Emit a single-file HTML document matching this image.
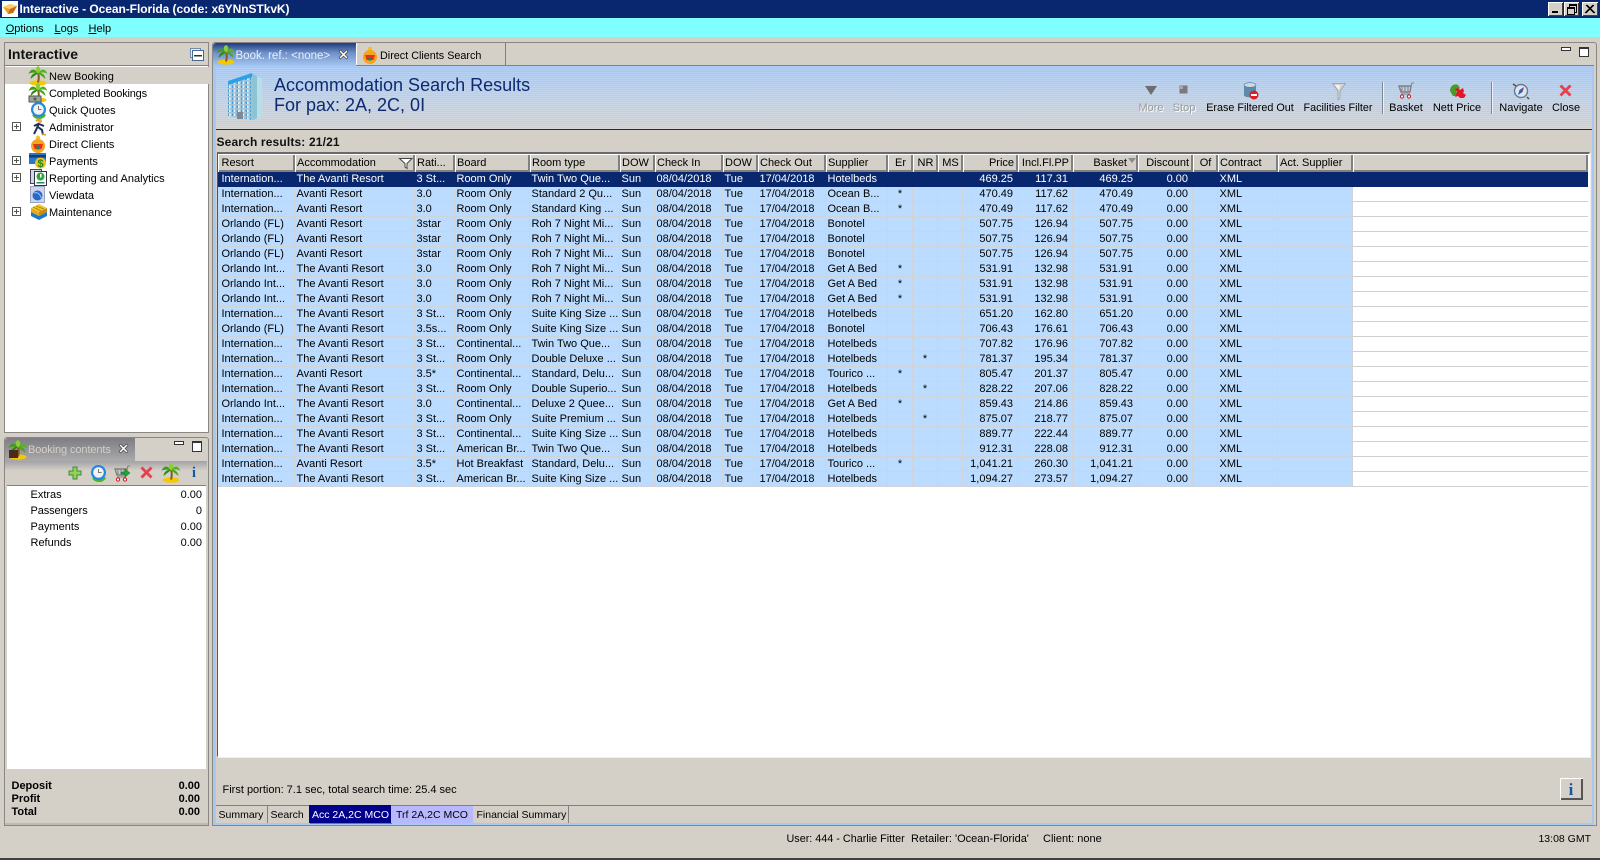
<!DOCTYPE html>
<html><head><meta charset="utf-8"><title>Interactive</title>
<style>
html,body{margin:0;padding:0;width:1600px;height:860px;overflow:hidden;background:#d4d0c8}
body{position:relative;font:11px/14px "Liberation Sans",Arial,sans-serif;color:#000}
.a{position:absolute;white-space:nowrap}
.t{position:absolute;white-space:nowrap;height:14px;line-height:14px}
.c{transform:translateX(-50%)}
.r{text-align:right}
svg{position:absolute;overflow:visible}
table{position:absolute;left:218px;top:154px;width:1370px;border-collapse:separate;border-spacing:0;table-layout:fixed}
th{height:18px;padding:0 0 0 2px;font-weight:normal;text-align:left;background:#d4d0c8;box-shadow:inset 1px 1px #fff,inset -2px -2px #808080;box-sizing:border-box;white-space:nowrap;overflow:hidden}
td{height:15px;padding:0 0 0 1.5px;box-sizing:border-box;background:#bbdcff;border-right:1px solid #d0d4d8;border-bottom:1px solid #d0d4d8;white-space:nowrap;overflow:hidden;line-height:14px}
td:first-child,th:first-child{padding-left:3.500px}
td.n,th.n{text-align:right;padding-right:4px;padding-left:0}
td.m,th.m{text-align:center;padding-left:0}
td:last-child{background:#fff;border-right:0;border-bottom:1px solid #d0d0d0}
tr.s td{background:#08276e;color:#fff;border-color:#08276e}
.b{position:absolute;background:#d4d0c8;box-shadow:inset 1px 1px #fff,inset -1px -1px #404040;width:16px;height:14px;top:2px}
.f{font-size:10.500px}
</style></head><body>
<svg width="0" height="0" style="position:absolute"><defs>
<g id="palm"><ellipse cx="10" cy="17" rx="8.500" ry="2.600" fill="#f6c800"/><path d="M10 16.500Q11.500 11 10 7" stroke="#8a5a1e" stroke-width="2" fill="none"/><path d="M10 8C7 2 3 2 .5 8C3 6.500 7 6 10 8Z" fill="#3f9d1a"/><path d="M10 8C13 2 17 2 19.500 8C17 6 13 6 10 8Z" fill="#55b322"/><path d="M10 8C7 4 7 1.500 10 0C13 1.500 13 4 10 8Z" fill="#8ad032"/><path d="M10 7C5.500 6.500 3 9 2.500 13C6 10 8 9 10 7Z" fill="#2f8a14"/><path d="M10 7C14.500 6.500 17 9 17.500 13C14 10 12 9 10 7Z" fill="#4aa61e"/></g>
<g id="clock"><path d="M3 14A8 8 0 0 0 17 14L14 12A5 5 0 0 1 6 13Z" fill="#4ab52a"/><circle cx="9.500" cy="8.500" r="7.500" fill="#2488de"/><circle cx="9.500" cy="8.500" r="5.300" fill="#f2f2f2"/><path d="M9.500 5V8.500H12.500" stroke="#777" stroke-width="1" fill="none"/></g>
<g id="cart"><path d="M1 3H13L12 9H3Z" fill="none" stroke="#808080" stroke-width="1.400"/><path d="M4 3V9M7 3V9M10 3V9M13 3L14 0H16M3 11H12" stroke="#808080" fill="none"/><circle cx="4" cy="13.500" r="1.600" fill="#fff" stroke="#d01818"/><circle cx="11" cy="13.500" r="1.600" fill="#fff" stroke="#d01818"/></g>
<g id="x"><path d="M1.500 3.500L3.500 1.500L7.500 5.500L11.500 1.500L13.500 3.500L9.500 7.500L13.500 11.500L11.500 13.500L7.500 9.500L3.500 13.500L1.500 11.500L5.500 7.500Z" fill="#e4404e"/></g>
<g id="wx"><path d="M1 2.500L2.500 1L5.500 4L8.500 1L10 2.500L7 5.500L10 8.500L8.500 10L5.500 7L2.500 10L1 8.500L4 5.500Z" fill="#fff" stroke="#333" stroke-width=".6"/></g>
<g id="person"><circle cx="9" cy="3" r="2.200" fill="#f2c21a"/><circle cx="9" cy="11" r="7" fill="#f4a41e"/><path d="M4 9H14L12.500 14H5.500Z" fill="#e8301a"/><rect x="7.500" y="11" width="3" height="3.500" fill="#128a64"/></g>
<pattern id="win" width="4.500" height="4" patternUnits="userSpaceOnUse"><rect width="4.500" height="4" fill="#a9c3d4"/><rect x=".5" y=".5" width="3" height="2.500" fill="#e4f2fa"/><rect x=".5" y=".5" width="1.500" height="2.500" fill="#3aa0e0"/></pattern>
</defs></svg>

<!-- title bar -->
<div class="a" style="left:0;top:0;width:1600px;height:18px;background:#08276e"></div>
<svg style="left:2px;top:1px" width="16" height="16"><rect width="16" height="16" fill="#fff"/><path d="M1 6L8 3L15 5L11 12L6 13Z" fill="#f0a020"/><path d="M1 6L8 8L15 5L8 3Z" fill="#f7d070"/><path d="M8 8L6 13L11 12L15 5Z" fill="#c86a10"/></svg>
<div class="t" style="left:19.500px;top:2px;color:#fff;font-weight:bold;font-size:12px;letter-spacing:-.06px">Interactive - Ocean-Florida (code: x6YNnSTkvK)</div>
<div class="b" style="left:1548px;width:15px"><div class="a" style="left:4px;top:9px;width:6px;height:2px;background:#000"></div></div>
<div class="b" style="left:1564px;width:15px"><div class="a" style="left:5px;top:2px;width:6px;height:6px;border:1px solid #000;border-top-width:2px"></div><div class="a" style="left:3px;top:5px;width:6px;height:5px;border:1px solid #000;border-top-width:2px;background:#d4d0c8"></div></div>
<div class="b" style="left:1582px"><svg style="left:4px;top:3px" width="9" height="8"><path d="M0 0L8 8M8 0L0 8M1 0L9 8M7 0L-1 8" stroke="#000" stroke-width=".9"/></svg></div>

<!-- menu -->
<div class="a" style="left:0;top:18px;width:1600px;height:19px;background:#80ffff"></div>
<div class="t" style="left:5.700px;top:22px"><u>O</u>ptions</div>
<div class="t" style="left:54.500px;top:22px"><u>L</u>ogs</div>
<div class="t" style="left:88.500px;top:22px"><u>H</u>elp</div>

<!-- left panel -->
<div class="a" style="left:4px;top:42px;width:203px;height:389px;border:1px solid #8a8782;background:#fff"></div>
<div class="a" style="left:5px;top:43px;width:203px;height:22px;background:#d4d0c8;border-bottom:1px solid #808080"></div>
<div class="t" style="left:8px;top:47px;font-weight:bold;font-size:14px;color:#111">Interactive</div>
<svg style="left:190px;top:48px" width="14" height="13"><rect x=".5" y=".5" width="10" height="9" fill="#e8eef6" stroke="#6f8cb0"/><rect x="2.500" y="2.500" width="11" height="10" fill="#fff" stroke="#48688e"/><rect x="4" y="7" width="8" height="1.500" fill="#333"/></svg>
<div class="a" style="left:5px;top:67px;width:204px;height:17px;background:#d4d0c8"></div>

<svg style="left:28px;top:66px" width="20" height="20"><use href="#palm"/></svg>
<svg style="left:28px;top:83px" width="20" height="20"><use href="#palm"/><rect x="1" y="13" width="12" height="6" fill="#9aa888" stroke="#556"/><circle cx="7" cy="16" r="1.500" fill="#556"/></svg>
<svg style="left:29px;top:101px" width="20" height="20"><use href="#clock"/></svg>
<svg style="left:31px;top:118px" width="18" height="18"><circle cx="9" cy="3" r="2" fill="#e8a868"/><path d="M8 5L6 10L3 16M7 9L11 12L12 17M7 6L3 8M8 6L13 8" stroke="#203060" stroke-width="2" fill="none"/><path d="M5 3L8 1" stroke="#e8a020" stroke-width="2"/><path d="M11 16L15 17" stroke="#d0a020" stroke-width="1.500"/></svg>
<svg style="left:29px;top:135px" width="18" height="18"><use href="#person"/></svg>
<svg style="left:29px;top:152px" width="18" height="18"><rect y="1" width="17" height="11" fill="#2a78c8"/><rect y="3" width="17" height="2.500" fill="#163a78"/><circle cx="11.500" cy="11" r="5.500" fill="#f2c21a"/><text x="11.500" y="15" text-anchor="middle" font-size="11" font-weight="bold" fill="#1a8a28" font-family="Liberation Sans">$</text></svg>
<svg style="left:30px;top:169px" width="18" height="18"><rect x=".5" y=".5" width="11" height="14" fill="#cfd8e4" stroke="#445"/><rect x="4.500" y="2.500" width="12" height="14" fill="#fff" stroke="#334"/><circle cx="10.500" cy="7.500" r="4" fill="#2aa838"/><rect x="10" y="5" width="1.500" height="3.500" fill="#fff"/><rect x="6.500" y="13" width="8" height="1.500" fill="#286"/></svg>
<svg style="left:30px;top:186px" width="16" height="18"><rect x=".5" y=".5" width="14" height="16" fill="#cdd6ec" stroke="#9aa4c0"/><circle cx="7.500" cy="9.500" r="5" fill="#2a68c8"/><path d="M4 7Q7 6 9 8T11 12" stroke="#9cc8f0" fill="none"/></svg>
<svg style="left:30px;top:203px" width="18" height="18"><path d="M1 5L9 1L17 5L9 9Z" fill="#f0c828"/><path d="M1 5V9L9 13V9Z" fill="#e8a818"/><path d="M17 5V9L9 13V9Z" fill="#c88818"/><path d="M1 9V13L9 17V13ZM17 9V13L9 17V13Z" fill="#1a78c8"/><path d="M3 4L11 8M6 3L14 6" stroke="#a87810" stroke-width=".7"/></svg>
<div class="t" style="left:49px;top:70px">New Booking</div>
<div class="t" style="left:49px;top:87px;letter-spacing:-.2px">Completed Bookings</div>
<div class="t" style="left:49px;top:104px">Quick Quotes</div>
<div class="t" style="left:49px;top:121px">Administrator</div>
<div class="t" style="left:49px;top:138px">Direct Clients</div>
<div class="t" style="left:49px;top:155px">Payments</div>
<div class="t" style="left:49px;top:172px">Reporting and Analytics</div>
<div class="t" style="left:49px;top:189px">Viewdata</div>
<div class="t" style="left:49px;top:206px">Maintenance</div>
<svg style="left:12px;top:122px" width="9" height="9"><path d="M.5 .5H8.500V8.500H.5ZM2 4.500H7M4.500 2V7" fill="#fff" stroke="#555"/></svg>
<svg style="left:12px;top:156px" width="9" height="9"><path d="M.5 .5H8.500V8.500H.5ZM2 4.500H7M4.500 2V7" fill="#fff" stroke="#555"/></svg>
<svg style="left:12px;top:173px" width="9" height="9"><path d="M.5 .5H8.500V8.500H.5ZM2 4.500H7M4.500 2V7" fill="#fff" stroke="#555"/></svg>
<svg style="left:12px;top:207px" width="9" height="9"><path d="M.5 .5H8.500V8.500H.5ZM2 4.500H7M4.500 2V7" fill="#fff" stroke="#555"/></svg>

<!-- booking contents panel -->
<div class="a" style="left:4px;top:437px;width:203px;height:387px;border:1px solid #8a8782;border-radius:3px 3px 0 0;background:#d4d0c8"></div>
<div class="a" style="left:5px;top:438px;width:130px;height:23px;background:linear-gradient(#7d7d83,#aaa9ab);border-radius:3px 0 0 0"></div>
<div class="a" style="left:5px;top:461px;width:202px;height:24px;background:linear-gradient(#a2a2a6,#d4d0c8 40%);"></div>
<div class="a" style="left:7px;top:485px;width:199px;height:1px;background:#808080"></div>
<div class="a" style="left:7px;top:486px;width:199px;height:283px;background:#fff"></div>
<svg style="left:8px;top:440px" width="20" height="20"><use href="#palm"/><rect x="1" y="10" width="9" height="8" fill="#4a2a18"/></svg>
<div class="t" style="left:28px;top:443px;color:#d4d0c8;letter-spacing:-.1px">Booking contents</div>
<svg style="left:118px;top:443px" width="11" height="11"><use href="#wx"/></svg>
<div class="a" style="left:174px;top:441px;width:8px;height:2px;border:1px solid #333;background:#fff"></div>
<div class="a" style="left:192px;top:441px;width:8px;height:8px;border:1px solid #333;border-top-width:2px;background:#fff"></div>
<svg style="left:68px;top:466px" width="14" height="14"><path d="M5 1H9V5H13V9H9V13H5V9H1V5H5Z" fill="#98d050" stroke="#3a8a48"/></svg>
<svg style="left:89px;top:464px" width="20" height="20"><use href="#clock"/></svg>
<svg style="left:114px;top:466px" width="18" height="16"><use href="#cart"/><path d="M7 6H11V3L16 7L11 11V8H7Z" fill="#12b030" stroke="#086a18" stroke-width=".5"/></svg>
<svg style="left:139px;top:465px" width="15" height="15"><use href="#x"/></svg>
<svg style="left:161px;top:463px" width="20" height="20"><use href="#palm"/></svg>
<div class="t c" style="left:194px;top:465px;font:bold 15px/16px 'Liberation Serif',serif;color:#145aa0">i</div>
<div class="t" style="left:30.500px;top:488px">Extras</div><div class="t r" style="right:1398px;top:488px">0.00</div>
<div class="t" style="left:30.500px;top:504px;letter-spacing:-.1px">Passengers</div><div class="t r" style="right:1398px;top:504px">0</div>
<div class="t" style="left:30.500px;top:520px">Payments</div><div class="t r" style="right:1398px;top:520px">0.00</div>
<div class="t" style="left:30.500px;top:536px">Refunds</div><div class="t r" style="right:1398px;top:536px">0.00</div>
<div class="t" style="left:11.500px;top:779px;font-weight:bold">Deposit</div><div class="t r" style="right:1400px;top:779px;font-weight:bold">0.00</div>
<div class="t" style="left:11.500px;top:792px;font-weight:bold">Profit</div><div class="t r" style="right:1400px;top:792px;font-weight:bold">0.00</div>
<div class="t" style="left:11.500px;top:805px;font-weight:bold">Total</div><div class="t r" style="right:1400px;top:805px;font-weight:bold">0.00</div>
<div class="a" style="left:5px;top:823px;width:203px;height:2px;background:#bdbab3"></div>

<!-- right panel -->
<div class="a" style="left:212px;top:42px;width:1383px;height:782px;border:1px solid #8a8782;border-radius:3px 3px 0 0;background:#d4d0c8"></div>
<div class="a" style="left:213px;top:65px;width:1381px;height:1px;background:#808080"></div>
<div class="a" style="left:213px;top:66px;width:1381px;height:759px;border:solid #a6c8f2;border-width:0 2.500px 2px 3px;box-sizing:border-box"></div>
<div class="a" style="left:216px;top:66px;width:1376px;height:63px;background:repeating-linear-gradient(rgba(255,255,255,.1) 0 1px,rgba(0,0,0,.015) 1px 2px),linear-gradient(#a8caf6,#c2d2e6 55%,#d2d2d2)"></div>
<div class="a" style="left:216px;top:129px;width:1376px;height:1px;background:#0a2a6c"></div>
<!-- main tabs -->
<div class="a" style="left:213px;top:43px;width:143px;height:24px;background:linear-gradient(#1f3a80,#6e8fc6 40%,#a8caf6);border-radius:3px 0 0 0"></div>
<svg style="left:216px;top:45px" width="20" height="20"><use href="#palm"/></svg>
<div class="t" style="left:235.500px;top:49px;color:#e8f0fc;font-size:11.500px">Book. ref.: &lt;none&gt;</div>
<svg style="left:338px;top:49px" width="11" height="11"><use href="#wx"/></svg>
<div class="a" style="left:356px;top:43px;width:1px;height:22px;background:#fff"></div>
<div class="a" style="left:505px;top:43px;width:1px;height:22px;background:#808080"></div>
<svg style="left:361px;top:46px" width="18" height="18"><use href="#person"/></svg>
<div class="t" style="left:380px;top:49px;font-size:10.800px">Direct Clients Search</div>
<div class="a" style="left:1561px;top:47px;width:8px;height:2px;border:1px solid #333;background:#fff"></div>
<div class="a" style="left:1579px;top:47px;width:8px;height:7px;border:1px solid #333;border-top-width:2px;background:#fff"></div>

<!-- building -->
<svg style="left:227px;top:73px" width="36" height="48"><path d="M1 8L25 0V47L1 43Z" fill="url(#win)"/><path d="M25 0L35 6V44L25 47Z" fill="#b8dfe8"/><path d="M25 0L30 3V45.500L25 47Z" fill="#8cc4d4"/><path d="M1 8L25 0V4L1 12Z" fill="#2aa2e8"/><path d="M10 39H16V46H10Z" fill="#7d8a96"/></svg>
<div class="t" style="left:274px;top:75px;height:20px;line-height:20px;font-size:18px;color:#0d2a70">Accommodation Search Results</div>
<div class="t" style="left:274px;top:95px;height:20px;line-height:20px;font-size:18px;color:#0d2a70">For pax: 2A, 2C, 0I</div>

<!-- toolbar -->
<svg style="left:1144px;top:85px" width="14" height="11"><path d="M1 1H13L7 10Z" fill="#6e6e6e"/></svg>
<svg style="left:1179px;top:85px" width="10" height="10"><rect x=".5" y=".5" width="8" height="8" fill="#7a7a7a"/><rect x="1" y="1" width="3" height="3" fill="#a8a8a8"/></svg>
<svg style="left:1243px;top:82px" width="17" height="18"><path d="M1 3V14Q7 17 13 14V3Z" fill="#5c8cac"/><ellipse cx="7" cy="3" rx="6" ry="2.300" fill="#cfd8df" stroke="#4a7a9a" stroke-width=".6"/><circle cx="11" cy="13" r="4.500" fill="#d81e26"/><rect x="8" y="12" width="6" height="2" fill="#fff"/></svg>
<svg style="left:1332px;top:82px" width="14" height="19"><path d="M.5 1.500H13.500L8 9V16L6 18V9Z" fill="#d4d4d4" stroke="#999" stroke-width=".7"/><path d="M3 3H8L7 8Z" fill="#f4f4f4"/></svg>
<svg style="left:1398px;top:83px" width="17" height="16"><use href="#cart"/></svg>
<svg style="left:1449px;top:83px" width="18" height="16"><path d="M1 8C1 3 5 0 9 2L11 5L7 8L9 13H4Z" fill="#4a9a28"/><path d="M6 6L9 5L11 7L14 5L15 8L14 10L17 12L15 15H11L9 13L6 14L8 9Z" fill="#e01824"/></svg>
<svg style="left:1512px;top:82px" width="18" height="18"><circle cx="9" cy="9" r="6.500" fill="#d8e8f4" stroke="#6a7a8a" stroke-width="1.400"/><path d="M12 5L7.500 8L6 13L10.500 10Z" fill="#2860c0"/><path d="M12 5L9 9L10.500 10Z" fill="#e03020"/><path d="M1 2L4 4M15 15L17 17" stroke="#6a4a2a" stroke-width="1.500"/></svg>
<svg style="left:1558px;top:83px" width="15" height="15"><use href="#x"/></svg>
<div class="t c" style="left:1151px;top:101px;color:#9a9a9a;text-shadow:1px 1px 0 #fff">More</div>
<div class="t c" style="left:1184px;top:101px;color:#9a9a9a;text-shadow:1px 1px 0 #fff">Stop</div>
<div class="t c" style="left:1250px;top:101px;font-size:10.800px">Erase Filtered Out</div>
<div class="t c" style="left:1338px;top:101px;font-size:10.800px">Facilities Filter</div>
<div class="a" style="left:1381.500px;top:82px;width:1px;height:32px;background:#7f8890;box-shadow:1px 0 #eef"></div>
<div class="t c" style="left:1406px;top:101px">Basket</div>
<div class="t c" style="left:1457px;top:101px">Nett Price</div>
<div class="a" style="left:1490.500px;top:82px;width:1px;height:32px;background:#7f8890;box-shadow:1px 0 #eef"></div>
<div class="t c" style="left:1521px;top:101px">Navigate</div>
<div class="t c" style="left:1566px;top:101px">Close</div>

<div class="t" style="left:216.500px;top:135px;font-weight:bold;font-size:12px;letter-spacing:.15px;color:#111">Search results: 21/21</div>

<!-- grid frame -->
<div class="a" style="left:217px;top:152px;width:1373px;height:605px;box-sizing:border-box;background:#fff;border:1px solid #fff;border-top:2px solid #6a6a6a;border-left:1px solid #555;box-shadow:1px 1px 0 #eee"></div>
<table>
<colgroup><col style="width:77px"><col style="width:120px"><col style="width:40px"><col style="width:75px"><col style="width:90px"><col style="width:35px"><col style="width:68px"><col style="width:35px"><col style="width:68px"><col style="width:62px"><col style="width:25px"><col style="width:25px"><col style="width:25px"><col style="width:55px"><col style="width:55px"><col style="width:65px"><col style="width:55px"><col style="width:25px"><col style="width:60px"><col style="width:75px"><col style="width:235px"></colgroup>
<tr><th>Resort</th><th>Accommodation</th><th>Rati...</th><th>Board</th><th>Room type</th><th>DOW</th><th>Check In</th><th>DOW</th><th>Check Out</th><th>Supplier</th><th class="m">Er</th><th class="m">NR</th><th class="m">MS</th><th class="n">Price</th><th class="n">Incl.Fl.PP</th><th class="n" style="padding-right:11px">Basket</th><th class="n">Discount</th><th class="m">Of</th><th>Contract</th><th>Act. Supplier</th><th></th></tr>
<tr class="s"><td>Internation...</td><td>The Avanti Resort</td><td>3 St...</td><td>Room Only</td><td>Twin Two Que...</td><td>Sun</td><td>08/04/2018</td><td>Tue</td><td>17/04/2018</td><td>Hotelbeds</td><td class="m"></td><td class="m"></td><td class="m"></td><td class="n">469.25</td><td class="n">117.31</td><td class="n">469.25</td><td class="n">0.00</td><td></td><td>XML</td><td></td><td></td></tr>
<tr><td>Internation...</td><td>Avanti Resort</td><td>3.0</td><td>Room Only</td><td>Standard 2 Qu...</td><td>Sun</td><td>08/04/2018</td><td>Tue</td><td>17/04/2018</td><td>Ocean B...</td><td class="m">*</td><td class="m"></td><td class="m"></td><td class="n">470.49</td><td class="n">117.62</td><td class="n">470.49</td><td class="n">0.00</td><td></td><td>XML</td><td></td><td></td></tr>
<tr><td>Internation...</td><td>Avanti Resort</td><td>3.0</td><td>Room Only</td><td>Standard King ...</td><td>Sun</td><td>08/04/2018</td><td>Tue</td><td>17/04/2018</td><td>Ocean B...</td><td class="m">*</td><td class="m"></td><td class="m"></td><td class="n">470.49</td><td class="n">117.62</td><td class="n">470.49</td><td class="n">0.00</td><td></td><td>XML</td><td></td><td></td></tr>
<tr><td>Orlando (FL)</td><td>Avanti Resort</td><td>3star</td><td>Room Only</td><td>Roh 7 Night Mi...</td><td>Sun</td><td>08/04/2018</td><td>Tue</td><td>17/04/2018</td><td>Bonotel</td><td class="m"></td><td class="m"></td><td class="m"></td><td class="n">507.75</td><td class="n">126.94</td><td class="n">507.75</td><td class="n">0.00</td><td></td><td>XML</td><td></td><td></td></tr>
<tr><td>Orlando (FL)</td><td>Avanti Resort</td><td>3star</td><td>Room Only</td><td>Roh 7 Night Mi...</td><td>Sun</td><td>08/04/2018</td><td>Tue</td><td>17/04/2018</td><td>Bonotel</td><td class="m"></td><td class="m"></td><td class="m"></td><td class="n">507.75</td><td class="n">126.94</td><td class="n">507.75</td><td class="n">0.00</td><td></td><td>XML</td><td></td><td></td></tr>
<tr><td>Orlando (FL)</td><td>Avanti Resort</td><td>3star</td><td>Room Only</td><td>Roh 7 Night Mi...</td><td>Sun</td><td>08/04/2018</td><td>Tue</td><td>17/04/2018</td><td>Bonotel</td><td class="m"></td><td class="m"></td><td class="m"></td><td class="n">507.75</td><td class="n">126.94</td><td class="n">507.75</td><td class="n">0.00</td><td></td><td>XML</td><td></td><td></td></tr>
<tr><td>Orlando Int...</td><td>The Avanti Resort</td><td>3.0</td><td>Room Only</td><td>Roh 7 Night Mi...</td><td>Sun</td><td>08/04/2018</td><td>Tue</td><td>17/04/2018</td><td>Get A Bed</td><td class="m">*</td><td class="m"></td><td class="m"></td><td class="n">531.91</td><td class="n">132.98</td><td class="n">531.91</td><td class="n">0.00</td><td></td><td>XML</td><td></td><td></td></tr>
<tr><td>Orlando Int...</td><td>The Avanti Resort</td><td>3.0</td><td>Room Only</td><td>Roh 7 Night Mi...</td><td>Sun</td><td>08/04/2018</td><td>Tue</td><td>17/04/2018</td><td>Get A Bed</td><td class="m">*</td><td class="m"></td><td class="m"></td><td class="n">531.91</td><td class="n">132.98</td><td class="n">531.91</td><td class="n">0.00</td><td></td><td>XML</td><td></td><td></td></tr>
<tr><td>Orlando Int...</td><td>The Avanti Resort</td><td>3.0</td><td>Room Only</td><td>Roh 7 Night Mi...</td><td>Sun</td><td>08/04/2018</td><td>Tue</td><td>17/04/2018</td><td>Get A Bed</td><td class="m">*</td><td class="m"></td><td class="m"></td><td class="n">531.91</td><td class="n">132.98</td><td class="n">531.91</td><td class="n">0.00</td><td></td><td>XML</td><td></td><td></td></tr>
<tr><td>Internation...</td><td>The Avanti Resort</td><td>3 St...</td><td>Room Only</td><td>Suite King Size ...</td><td>Sun</td><td>08/04/2018</td><td>Tue</td><td>17/04/2018</td><td>Hotelbeds</td><td class="m"></td><td class="m"></td><td class="m"></td><td class="n">651.20</td><td class="n">162.80</td><td class="n">651.20</td><td class="n">0.00</td><td></td><td>XML</td><td></td><td></td></tr>
<tr><td>Orlando (FL)</td><td>The Avanti Resort</td><td>3.5s...</td><td>Room Only</td><td>Suite King Size ...</td><td>Sun</td><td>08/04/2018</td><td>Tue</td><td>17/04/2018</td><td>Bonotel</td><td class="m"></td><td class="m"></td><td class="m"></td><td class="n">706.43</td><td class="n">176.61</td><td class="n">706.43</td><td class="n">0.00</td><td></td><td>XML</td><td></td><td></td></tr>
<tr><td>Internation...</td><td>The Avanti Resort</td><td>3 St...</td><td>Continental...</td><td>Twin Two Que...</td><td>Sun</td><td>08/04/2018</td><td>Tue</td><td>17/04/2018</td><td>Hotelbeds</td><td class="m"></td><td class="m"></td><td class="m"></td><td class="n">707.82</td><td class="n">176.96</td><td class="n">707.82</td><td class="n">0.00</td><td></td><td>XML</td><td></td><td></td></tr>
<tr><td>Internation...</td><td>The Avanti Resort</td><td>3 St...</td><td>Room Only</td><td>Double Deluxe ...</td><td>Sun</td><td>08/04/2018</td><td>Tue</td><td>17/04/2018</td><td>Hotelbeds</td><td class="m"></td><td class="m">*</td><td class="m"></td><td class="n">781.37</td><td class="n">195.34</td><td class="n">781.37</td><td class="n">0.00</td><td></td><td>XML</td><td></td><td></td></tr>
<tr><td>Internation...</td><td>Avanti Resort</td><td>3.5*</td><td>Continental...</td><td>Standard, Delu...</td><td>Sun</td><td>08/04/2018</td><td>Tue</td><td>17/04/2018</td><td>Tourico ...</td><td class="m">*</td><td class="m"></td><td class="m"></td><td class="n">805.47</td><td class="n">201.37</td><td class="n">805.47</td><td class="n">0.00</td><td></td><td>XML</td><td></td><td></td></tr>
<tr><td>Internation...</td><td>The Avanti Resort</td><td>3 St...</td><td>Room Only</td><td>Double Superio...</td><td>Sun</td><td>08/04/2018</td><td>Tue</td><td>17/04/2018</td><td>Hotelbeds</td><td class="m"></td><td class="m">*</td><td class="m"></td><td class="n">828.22</td><td class="n">207.06</td><td class="n">828.22</td><td class="n">0.00</td><td></td><td>XML</td><td></td><td></td></tr>
<tr><td>Orlando Int...</td><td>The Avanti Resort</td><td>3.0</td><td>Continental...</td><td>Deluxe 2 Quee...</td><td>Sun</td><td>08/04/2018</td><td>Tue</td><td>17/04/2018</td><td>Get A Bed</td><td class="m">*</td><td class="m"></td><td class="m"></td><td class="n">859.43</td><td class="n">214.86</td><td class="n">859.43</td><td class="n">0.00</td><td></td><td>XML</td><td></td><td></td></tr>
<tr><td>Internation...</td><td>The Avanti Resort</td><td>3 St...</td><td>Room Only</td><td>Suite Premium ...</td><td>Sun</td><td>08/04/2018</td><td>Tue</td><td>17/04/2018</td><td>Hotelbeds</td><td class="m"></td><td class="m">*</td><td class="m"></td><td class="n">875.07</td><td class="n">218.77</td><td class="n">875.07</td><td class="n">0.00</td><td></td><td>XML</td><td></td><td></td></tr>
<tr><td>Internation...</td><td>The Avanti Resort</td><td>3 St...</td><td>Continental...</td><td>Suite King Size ...</td><td>Sun</td><td>08/04/2018</td><td>Tue</td><td>17/04/2018</td><td>Hotelbeds</td><td class="m"></td><td class="m"></td><td class="m"></td><td class="n">889.77</td><td class="n">222.44</td><td class="n">889.77</td><td class="n">0.00</td><td></td><td>XML</td><td></td><td></td></tr>
<tr><td>Internation...</td><td>The Avanti Resort</td><td>3 St...</td><td>American Br...</td><td>Twin Two Que...</td><td>Sun</td><td>08/04/2018</td><td>Tue</td><td>17/04/2018</td><td>Hotelbeds</td><td class="m"></td><td class="m"></td><td class="m"></td><td class="n">912.31</td><td class="n">228.08</td><td class="n">912.31</td><td class="n">0.00</td><td></td><td>XML</td><td></td><td></td></tr>
<tr><td>Internation...</td><td>Avanti Resort</td><td>3.5*</td><td>Hot Breakfast</td><td>Standard, Delu...</td><td>Sun</td><td>08/04/2018</td><td>Tue</td><td>17/04/2018</td><td>Tourico ...</td><td class="m">*</td><td class="m"></td><td class="m"></td><td class="n">1,041.21</td><td class="n">260.30</td><td class="n">1,041.21</td><td class="n">0.00</td><td></td><td>XML</td><td></td><td></td></tr>
<tr><td>Internation...</td><td>The Avanti Resort</td><td>3 St...</td><td>American Br...</td><td>Suite King Size ...</td><td>Sun</td><td>08/04/2018</td><td>Tue</td><td>17/04/2018</td><td>Hotelbeds</td><td class="m"></td><td class="m"></td><td class="m"></td><td class="n">1,094.27</td><td class="n">273.57</td><td class="n">1,094.27</td><td class="n">0.00</td><td></td><td>XML</td><td></td><td></td></tr>
</table>
<svg style="left:399px;top:158px" width="14" height="11"><path d="M.5 .5H13L8 5.500V10.500L6 9V5.500Z" fill="#fff" stroke="#444"/></svg>
<svg style="left:1128px;top:158px" width="8" height="6"><path d="M0 0H8L4 5Z" fill="#8c8c8c"/></svg>

<div class="t" style="left:222.500px;top:783px">First portion: 7.1 sec, total search time: 25.4 sec</div>
<div class="a" style="left:1560px;top:778px;width:23px;height:22px;background:#d4d0c8;box-shadow:inset 1px 1px #fff,inset -2px -2px #555"></div>
<div class="t c" style="left:1571px;top:781px;font:bold 17px/17px 'Liberation Serif',serif;color:#145aa0">i</div>

<!-- bottom tabs -->
<div class="a" style="left:216px;top:805px;width:1376px;height:1px;background:#808080"></div>
<div class="a" style="left:216px;top:806px;width:52px;height:17px;border-right:1px solid #808080;box-sizing:border-box"></div>
<div class="a" style="left:268px;top:806px;width:41px;height:17px"></div>
<div class="a" style="left:309px;top:805px;width:82px;height:18px;background:#00008b;box-shadow:1px 1px 0 #777"></div>
<div class="a" style="left:391px;top:806px;width:82px;height:17px;background:#b8b8ff"></div>
<div class="a" style="left:473px;top:806px;width:96px;height:17px;border-right:1px solid #808080;box-sizing:border-box"></div>
<div class="t f" style="left:218.500px;top:808px">Summary</div>
<div class="t f" style="left:270.500px;top:808px">Search</div>
<div class="t f" style="left:312px;top:808px;color:#fff">Acc 2A,2C MCO</div>
<div class="t f" style="left:396px;top:808px">Trf 2A,2C MCO</div>
<div class="t f" style="left:476.500px;top:808px">Financial Summary</div>

<!-- status -->
<div class="t" style="left:786.500px;top:832px;font-size:10.800px">User: 444 - Charlie Fitter</div>
<div class="t" style="left:911px;top:832px">Retailer: 'Ocean-Florida'</div>
<div class="t" style="left:1043px;top:832px">Client: none</div>
<div class="t r f" style="right:9px;top:832px">13:08 GMT</div>
<div class="a" style="left:0;top:858px;width:1600px;height:2px;background:#404040"></div>
</body></html>
